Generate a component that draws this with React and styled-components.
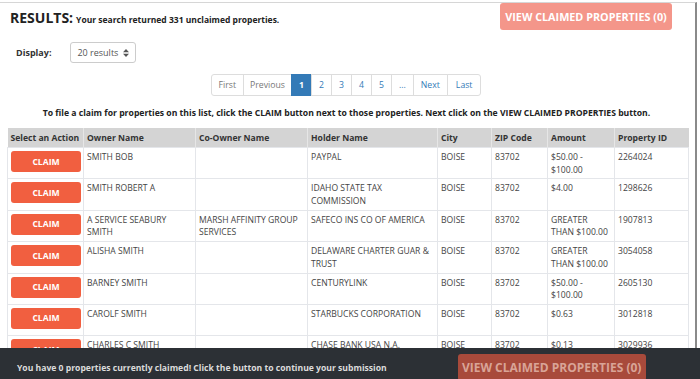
import React from 'react'
import styled, { createGlobalStyle } from 'styled-components';

const Global = createGlobalStyle`
  html, body {
    margin:0;
    padding:0;
    background:#fff;
    overflow:hidden;
    font-family:"Open Sans", "Liberation Sans", sans-serif;
    color:#333;
  }
`;

const Page = styled.div`
  width:697px;
  height:379px;
  margin-top:2px;
  border-top:1px solid #d6d6d6;
  border-right:2px solid #8a8a8a;
  box-sizing:border-box;
  padding:0 9px 0 7px;
`;

const TopBar = styled.div`
  display:flex;
  justify-content:space-between;
  align-items:flex-start;
`;

const Heading = styled.div`
  display:flex;
  align-items:baseline;
  gap:3px;
  padding:5px 0 0 3px;
`;

const Title = styled.span`
  font-size:14px;
  font-weight:700;
  color:#222;
`;

const Sub = styled.span`
  font-size:8.5px;
  font-weight:700;
  color:#222;
`;

const ClaimedButton = styled.button`
  font-family:inherit;
  border:none;
  border-radius:3px;
  background:${p => (p.dark ? "#a84a3b" : "#f4968a")};
  color:${p => (p.dark ? "#d9a497" : "#fff")};
  font-weight:700;
  font-size:${p => (p.dark ? "12px" : "10.8px")};
  height:27px;
  width:${p => (p.dark ? "188px" : "172px")};
  padding:0;
  margin-right:${p => (p.dark ? "0" : "14px")};
`;

const DisplayRow = styled.div`
  display:flex;
  align-items:center;
  gap:19px;
  margin:12px 0 0 9px;
`;

const Label = styled.span`
  font-size:9px;
  font-weight:700;
`;

const Select = styled.div`
  display:flex;
  align-items:center;
  gap:5px;
  height:21px;
  box-sizing:border-box;
  border:1px solid #ccc;
  border-radius:3px;
  padding:0 6px;
  font-size:9px;
  color:#555;
`;

const Pager = styled.div`
  display:flex;
  justify-content:center;
  margin-top:11px;
`;

const PageItem = styled.div`
  height:22px;
  box-sizing:border-box;
  display:flex;
  align-items:center;
  justify-content:center;
  padding:0 ${p => p.pad || 6}px;
  min-width:21px;
  border:1px solid ${p => (p.active ? "#337ab7" : "#ddd")};
  margin-left:-1px;
  background:${p => (p.active ? "#337ab7" : "#fff")};
  color:${p => (p.active ? "#fff" : p.muted ? "#777" : "#337ab7")};
  font-weight:${p => (p.active ? 700 : 400)};
  font-size:8.7px;
  &:first-child { border-radius:3px 0 0 3px; }
  &:last-child { border-radius:0 3px 3px 0; }
`;

const Notice = styled.p`
  margin:11px 0 0;
  text-align:center;
  font-size:8.65px;
  font-weight:700;
  color:#222;
`;

const Table = styled.table`
  margin-top:9px;
  border-collapse:collapse;
  table-layout:fixed;
  width:681px;
  font-size:8.6px;
`;

const Th = styled.th`
  background:#d4d4d4;
  text-align:left;
  font-weight:700;
  color:#333;
  height:19px;
  padding:0 3px;
  border-left:1px solid #e6e6e6;
  white-space:nowrap;
  &:first-child { border-left:none; }
`;

const Td = styled.td`
  vertical-align:top;
  padding:3px 3px 0;
  height:27.4px;
  line-height:12.7px;
  border:1px solid #e4e6ea;
  color:#444;
`;

const ClaimButton = styled.button`
  font-family:inherit;
  display:block;
  width:70px;
  height:21px;
  border:none;
  border-radius:3px;
  background:#f15f40;
  color:#fff;
  font-weight:700;
  font-size:8.6px;
  padding:0;
  margin-bottom:4px;
`;

const Footer = styled.div`
  position:fixed;
  left:0;
  right:0;
  bottom:0;
  height:31px;
  background:#2c3035;
  display:flex;
  align-items:flex-start;
  padding:6px 0 0 17px;
  box-sizing:border-box;
  gap:71px;
`;

const FooterText = styled.span`
  font-size:8.6px;
  font-weight:700;
  color:#dcdcdc;
  margin-top:8px;
`;

const cols = [76, 112, 112, 130, 54, 56, 67, 74];
const heads = ["Select an Action", "Owner Name", "Co-Owner Name", "Holder Name", "City", "ZIP Code", "Amount", "Property ID"];

const rows = [
  ["SMITH BOB", "", "PAYPAL", "BOISE", "83702", "$50.00 - $100.00", "2264024"],
  ["SMITH ROBERT A", "", "IDAHO STATE TAX COMMISSION", "BOISE", "83702", "$4.00", "1298626"],
  ["A SERVICE SEABURY SMITH", "MARSH AFFINITY GROUP SERVICES", "SAFECO INS CO OF AMERICA", "BOISE", "83702", "GREATER THAN $100.00", "1907813"],
  ["ALISHA SMITH", "", "DELAWARE CHARTER GUAR & TRUST", "BOISE", "83702", "GREATER THAN $100.00", "3054058"],
  ["BARNEY SMITH", "", "CENTURYLINK", "BOISE", "83702", "$50.00 - $100.00", "2605130"],
  ["CAROLF SMITH", "", "STARBUCKS CORPORATION", "BOISE", "83702", "$0.63", "3012818"],
  ["CHARLES C SMITH", "", "CHASE BANK USA N.A.", "BOISE", "83702", "$0.13", "3029936"],
];

const pages = [
  { t: "First", muted: true, pad: 7 },
  { t: "Previous", muted: true, pad: 6 },
  { t: "1", active: true },
  { t: "2" }, { t: "3" }, { t: "4" }, { t: "5" },
  { t: "...", pad: 7 },
  { t: "Next", pad: 7 },
  { t: "Last", pad: 8 },
];

function SortArrows() {
  return (
    <svg width="6" height="8" viewBox="0 0 6 8">
      <path d="M0 3.2 L3 0 L6 3.2 Z M0 4.8 L3 8 L6 4.8 Z" fill="#555" />
    </svg>
  );
}

export default function App() {
  return (
    <>
      <Global />
      <Page>
        <TopBar>
          <Heading>
            <Title>RESULTS:</Title>
            <Sub>Your search returned 331 unclaimed properties.</Sub>
          </Heading>
          <ClaimedButton>VIEW CLAIMED PROPERTIES (0)</ClaimedButton>
        </TopBar>
        <DisplayRow>
          <Label>Display:</Label>
          <Select>20 results <SortArrows /></Select>
        </DisplayRow>
        <Pager>
          {pages.map(p => (
            <PageItem key={p.t} active={p.active} muted={p.muted} pad={p.pad}>{p.t}</PageItem>
          ))}
        </Pager>
        <Notice>
          To file a claim for properties on this list, click the CLAIM button next to those properties. Next click on the VIEW CLAIMED PROPERTIES button.
        </Notice>
        <Table>
          <colgroup>
            {cols.map((w, i) => <col key={i} style={{ width: w }} />)}
          </colgroup>
          <thead>
            <tr>{heads.map(h => <Th key={h}>{h}</Th>)}</tr>
          </thead>
          <tbody>
            {rows.map(r => (
              <tr key={r[6]}>
                <Td><ClaimButton>CLAIM</ClaimButton></Td>
                {r.map((c, i) => <Td key={i}>{c}</Td>)}
              </tr>
            ))}
          </tbody>
        </Table>
      </Page>
      <Footer>
        <FooterText>You have 0 properties currently claimed! Click the button to continue your submission</FooterText>
        <ClaimedButton dark>VIEW CLAIMED PROPERTIES (0)</ClaimedButton>
      </Footer>
    </>
  )
}
